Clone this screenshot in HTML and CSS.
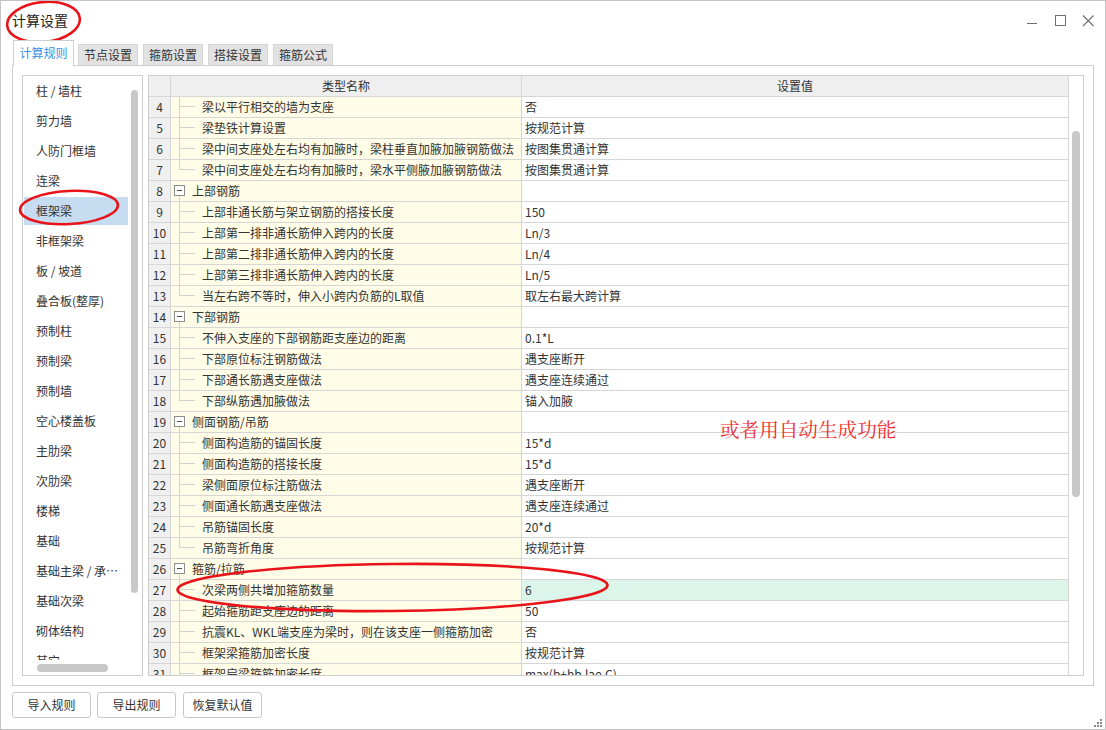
FILE: index.html
```html
<!DOCTYPE html>
<html lang="zh-CN">
<head>
<meta charset="utf-8">
<title>计算设置</title>
<link rel="stylesheet" href="styles.css">
</head>
<body>
<div class="window">
  <div class="titlebar">
    <div class="title">计算设置</div>
    <div class="controls">
      <svg class="ctl" width="12" height="12" viewBox="0 0 12 12"><line x1="1" y1="8.5" x2="11" y2="8.5" stroke="#707070" stroke-width="1"/></svg>
      <svg class="ctl" width="12" height="12" viewBox="0 0 12 12"><rect x="1.5" y="0.5" width="10" height="10" fill="none" stroke="#707070" stroke-width="1"/></svg>
      <svg class="ctl" width="12" height="12" viewBox="0 0 12 12"><path d="M1 0.5 L11.5 11 M11.5 0.5 L1 11" stroke="#707070" stroke-width="1.1" fill="none"/></svg>
    </div>
  </div>

  <div class="tabs">
    <div class="tab active">计算规则</div>
    <div class="tab">节点设置</div>
    <div class="tab">箍筋设置</div>
    <div class="tab">搭接设置</div>
    <div class="tab">箍筋公式</div>
  </div>

  <div class="panel">
    <div class="list">
      <div class="list-main">
        <div class="items">
          <div class="item">柱 / 墙柱</div>
          <div class="item">剪力墙</div>
          <div class="item">人防门框墙</div>
          <div class="item">连梁</div>
          <div class="item sel">框架梁</div>
          <div class="item">非框架梁</div>
          <div class="item">板 / 坡道</div>
          <div class="item">叠合板(整厚)</div>
          <div class="item">预制柱</div>
          <div class="item">预制梁</div>
          <div class="item">预制墙</div>
          <div class="item">空心楼盖板</div>
          <div class="item">主肋梁</div>
          <div class="item">次肋梁</div>
          <div class="item">楼梯</div>
          <div class="item">基础</div>
          <div class="item">基础主梁 / 承台梁</div>
          <div class="item">基础次梁</div>
          <div class="item">砌体结构</div>
          <div class="item">其它</div>
        </div>
        <div class="vs"><div class="vthumb list-vthumb"></div></div>
      </div>
      <div class="hs"><div class="hthumb"></div></div>
    </div>

    <div class="grid">
      <div class="grid-body">
        <div class="row hdr">
          <div class="num"></div>
          <div class="name hname">类型名称</div>
          <div class="val hval">设置值</div>
        </div>
        <div class="row"><div class="num">4</div><div class="name"><span class="br"></span>梁以平行相交的墙为支座</div><div class="val">否</div></div>
        <div class="row"><div class="num">5</div><div class="name"><span class="br"></span>梁垫铁计算设置</div><div class="val">按规范计算</div></div>
        <div class="row"><div class="num">6</div><div class="name"><span class="br"></span>梁中间支座处左右均有加腋时，梁柱垂直加腋加腋钢筋做法</div><div class="val">按图集贯通计算</div></div>
        <div class="row"><div class="num">7</div><div class="name"><span class="br last"></span>梁中间支座处左右均有加腋时，梁水平侧腋加腋钢筋做法</div><div class="val">按图集贯通计算</div></div>
        <div class="row"><div class="num">8</div><div class="name"><span class="gb"><span class="mbox"></span></span>上部钢筋</div><div class="val"></div></div>
        <div class="row"><div class="num">9</div><div class="name"><span class="br"></span>上部非通长筋与架立钢筋的搭接长度</div><div class="val">150</div></div>
        <div class="row"><div class="num">10</div><div class="name"><span class="br"></span>上部第一排非通长筋伸入跨内的长度</div><div class="val">Ln/3</div></div>
        <div class="row"><div class="num">11</div><div class="name"><span class="br"></span>上部第二排非通长筋伸入跨内的长度</div><div class="val">Ln/4</div></div>
        <div class="row"><div class="num">12</div><div class="name"><span class="br"></span>上部第三排非通长筋伸入跨内的长度</div><div class="val">Ln/5</div></div>
        <div class="row"><div class="num">13</div><div class="name"><span class="br last"></span>当左右跨不等时，伸入小跨内负筋的L取值</div><div class="val">取左右最大跨计算</div></div>
        <div class="row"><div class="num">14</div><div class="name"><span class="gb"><span class="mbox"></span></span>下部钢筋</div><div class="val"></div></div>
        <div class="row"><div class="num">15</div><div class="name"><span class="br"></span>不伸入支座的下部钢筋距支座边的距离</div><div class="val">0.1*L</div></div>
        <div class="row"><div class="num">16</div><div class="name"><span class="br"></span>下部原位标注钢筋做法</div><div class="val">遇支座断开</div></div>
        <div class="row"><div class="num">17</div><div class="name"><span class="br"></span>下部通长筋遇支座做法</div><div class="val">遇支座连续通过</div></div>
        <div class="row"><div class="num">18</div><div class="name"><span class="br last"></span>下部纵筋遇加腋做法</div><div class="val">锚入加腋</div></div>
        <div class="row"><div class="num">19</div><div class="name"><span class="gb"><span class="mbox"></span></span>侧面钢筋/吊筋</div><div class="val"></div></div>
        <div class="row"><div class="num">20</div><div class="name"><span class="br"></span>侧面构造筋的锚固长度</div><div class="val">15*d</div></div>
        <div class="row"><div class="num">21</div><div class="name"><span class="br"></span>侧面构造筋的搭接长度</div><div class="val">15*d</div></div>
        <div class="row"><div class="num">22</div><div class="name"><span class="br"></span>梁侧面原位标注筋做法</div><div class="val">遇支座断开</div></div>
        <div class="row"><div class="num">23</div><div class="name"><span class="br"></span>侧面通长筋遇支座做法</div><div class="val">遇支座连续通过</div></div>
        <div class="row"><div class="num">24</div><div class="name"><span class="br"></span>吊筋锚固长度</div><div class="val">20*d</div></div>
        <div class="row"><div class="num">25</div><div class="name"><span class="br last"></span>吊筋弯折角度</div><div class="val">按规范计算</div></div>
        <div class="row"><div class="num">26</div><div class="name"><span class="gb"><span class="mbox"></span></span>箍筋/拉筋</div><div class="val"></div></div>
        <div class="row"><div class="num">27</div><div class="name"><span class="br"></span>次梁两侧共增加箍筋数量</div><div class="val selval">6</div></div>
        <div class="row"><div class="num">28</div><div class="name"><span class="br"></span>起始箍筋距支座边的距离</div><div class="val">50</div></div>
        <div class="row"><div class="num">29</div><div class="name"><span class="br"></span>抗震KL、WKL端支座为梁时，则在该支座一侧箍筋加密</div><div class="val">否</div></div>
        <div class="row"><div class="num">30</div><div class="name"><span class="br"></span>框架梁箍筋加密长度</div><div class="val">按规范计算</div></div>
        <div class="row"><div class="num">31</div><div class="name"><span class="br"></span>框架扁梁箍筋加密长度</div><div class="val">max(b+hb,lae,C)</div></div>
      </div>
      <div class="gvs"><div class="vthumb grid-vthumb"></div></div>
    </div>
  </div>

  <div class="buttons">
    <button class="btn">导入规则</button>
    <button class="btn">导出规则</button>
    <button class="btn">恢复默认值</button>
  </div>

  <svg class="grip" width="9" height="9" viewBox="0 0 9 9">
    <rect x="6" y="0" width="2" height="2" fill="#8a8a8a"/>
    <rect x="3" y="3" width="2" height="2" fill="#8a8a8a"/>
    <rect x="6" y="3" width="2" height="2" fill="#8a8a8a"/>
    <rect x="0" y="6" width="2" height="2" fill="#8a8a8a"/>
    <rect x="3" y="6" width="2" height="2" fill="#8a8a8a"/>
    <rect x="6" y="6" width="2" height="2" fill="#8a8a8a"/>
  </svg>

  <div class="overlay">
    <svg class="marks" width="1106" height="730" viewBox="0 0 1106 730">
      <ellipse cx="43.5" cy="22" rx="36.5" ry="20" transform="rotate(-6 43.5 22)" fill="none" stroke="#e8141a" stroke-width="2.6"/>
      <ellipse cx="69" cy="207.5" rx="49" ry="16.5" transform="rotate(-3 69 207.5)" fill="none" stroke="#e8141a" stroke-width="2.6"/>
      <ellipse cx="392.5" cy="587.5" rx="215" ry="23.5" transform="rotate(-0.6 392.5 587.5)" fill="none" stroke="#e8141a" stroke-width="2.6"/>
    </svg>
    <div class="note">或者用自动生成功能</div>
  </div>
</div>
</body>
</html>
```

FILE: styles.css
```css
* { box-sizing: border-box; }

html, body {
  margin: 0;
  padding: 0;
  background: #ffffff;
}

body {
  font-family: "Noto Sans CJK SC", "Noto Sans", sans-serif;
  font-size: 12px;
  color: #333333;
}

.window {
  position: relative;
  width: 1106px;
  height: 730px;
  border: 1px solid #c4c4c4;
  background: #ffffff;
  display: flex;
  flex-direction: column;
  overflow: hidden;
}

/* title bar */
.titlebar {
  height: 39px;
  display: flex;
  align-items: center;
  padding: 0 11px 0 11px;
  flex: none;
}
.title {
  font-size: 14px;
  color: #1e1e1e;
  line-height: 20px;
  margin-top: -2px;
}
.controls {
  margin-left: auto;
  display: flex;
  gap: 16px;
  align-items: center;
}
.ctl { display: block; }

/* tabs */
.tabs {
  height: 25px;
  flex: none;
  display: flex;
  align-items: flex-end;
  padding-left: 12px;
  gap: 5px;
}
.tab {
  height: 21px;
  line-height: 19px;
  padding: 0 5px;
  background: #e2e2e2;
  border: 1px solid #d6d6d6;
  border-bottom: none;
  color: #333333;
  font-size: 12px;
  white-space: nowrap;
}
.tab.active {
  position: relative;
  z-index: 2;
  height: 26px;
  margin-bottom: -1px;
  width: 61px;
  text-align: center;
  padding: 0;
  line-height: 24px;
  background: #ffffff;
  border-color: #cfcfcf;
  color: #3b8ee0;
  margin-right: -1px;
}

/* panel */
.panel {
  flex: none;
  margin-left: 11px;
  width: 1082px;
  height: 621px;
  border: 1px solid #cdcdcd;
  padding: 9px;
  display: flex;
  gap: 5px;
}

/* side list */
.list {
  width: 121px;
  height: 601px;
  border: 1px solid #cdcdcd;
  display: flex;
  flex-direction: column;
  flex: none;
}
.list-main {
  display: flex;
  height: 584px;
  flex: none;
}
.items {
  width: 105px;
  height: 584px;
  overflow: hidden;
  flex: none;
}
.item {
  height: 30px;
  line-height: 30px;
  padding: 0 9px 0 13px;
  white-space: nowrap;
  overflow: hidden;
  text-overflow: ellipsis;
  color: #333333;
}
.item.sel {
  background: #c5dcf1;
  box-shadow: inset 1px 1px 0 #ffffff, inset 0 -1px 0 #ffffff;
}
.vs {
  width: 14px;
  flex: none;
  padding: 14px 0 0 3px;
}
.vthumb {
  width: 8px;
  background: #c8c8c8;
  border-radius: 4px;
}
.list-vthumb { height: 503px; width: 7px; }
.hs {
  height: 15px;
  flex: none;
  padding: 4px 0 0 14px;
}
.hthumb {
  width: 71px;
  height: 8px;
  border-radius: 4px;
  background: #c8c8c8;
}

/* grid */
.grid {
  width: 936px;
  height: 601px;
  border: 1px solid #cdcdcd;
  display: flex;
  flex: none;
}
.grid-body {
  width: 919px;
  flex: none;
  overflow: hidden;
}
.row {
  display: flex;
  height: 21px;
  border-bottom: 1px solid #d6d6d6;
}
.num {
  width: 22px;
  flex: none;
  background: #f0f0f0;
  border-right: 1px solid #d6d6d6;
  text-align: center;
  line-height: 20px;
  color: #333333;
}
.name {
  width: 351px;
  flex: none;
  background: #fffde8;
  border-right: 1px solid #d6d6d6;
  display: flex;
  align-items: center;
  line-height: 20px;
  white-space: nowrap;
  overflow: hidden;
  color: #333333;
}
.val {
  width: 546px;
  flex: none;
  padding-left: 3px;
  line-height: 20px;
  white-space: nowrap;
  overflow: hidden;
  color: #333333;
}
.selval { background: #dcf5eb; }

.hdr .num, .hdr .name, .hdr .val { background: #efefef; }
.hname { justify-content: center; }
.hval { text-align: center; padding-left: 0; }

.br {
  width: 31px;
  height: 20px;
  flex: none;
  background:
    linear-gradient(#d2d2d2, #d2d2d2) 8px 0 / 1px 100% no-repeat,
    linear-gradient(#d2d2d2, #d2d2d2) 9px 9px / 15px 1px no-repeat;
}
.br.last {
  background:
    linear-gradient(#d2d2d2, #d2d2d2) 8px 0 / 1px 10px no-repeat,
    linear-gradient(#d2d2d2, #d2d2d2) 9px 9px / 15px 1px no-repeat;
}
.gb {
  width: 21px;
  height: 20px;
  flex: none;
  padding: 4px 0 0 3px;
  background: linear-gradient(#d2d2d2, #d2d2d2) 8px 15px / 1px 5px no-repeat;
}
.mbox {
  width: 11px;
  height: 11px;
  border: 1px solid #8d8d8d;
  background: #ffffff;
  display: flex;
  align-items: center;
  justify-content: center;
}
.mbox::before {
  content: "";
  width: 5px;
  height: 1px;
  background: #4a4a4a;
}

.gvs {
  width: 15px;
  flex: none;
  border-left: 1px solid #d6d6d6;
  padding: 55px 0 0 3px;
}
.grid-vthumb { height: 366px; }

/* buttons */
.buttons {
  flex: none;
  display: flex;
  gap: 6px;
  margin-top: 6px;
  padding-left: 11px;
}
.btn {
  width: 79px;
  height: 26px;
  border: 1px solid #c9c9c9;
  border-radius: 3px;
  background: #ffffff;
  font-family: "Noto Sans CJK SC", "Noto Sans", sans-serif;
  font-size: 12px;
  color: #333333;
  padding: 0;
  line-height: 24px;
}
.btn + .btn + .btn { margin-left: 1px; }

.grip {
  position: absolute;
  right: 2px;
  bottom: 1px;
}

/* red annotations */
.overlay {
  position: absolute;
  left: -1px;
  top: -1px;
  width: 1106px;
  height: 730px;
  pointer-events: none;
}
.marks {
  position: absolute;
  left: 0;
  top: 0;
}
.note {
  position: absolute;
  left: 720px;
  top: 417px;
  font-family: "Noto Serif CJK SC", "Noto Sans CJK SC", serif;
  font-size: 19.6px;
  line-height: 24px;
  color: #f02a2a;
  white-space: nowrap;
}
```
